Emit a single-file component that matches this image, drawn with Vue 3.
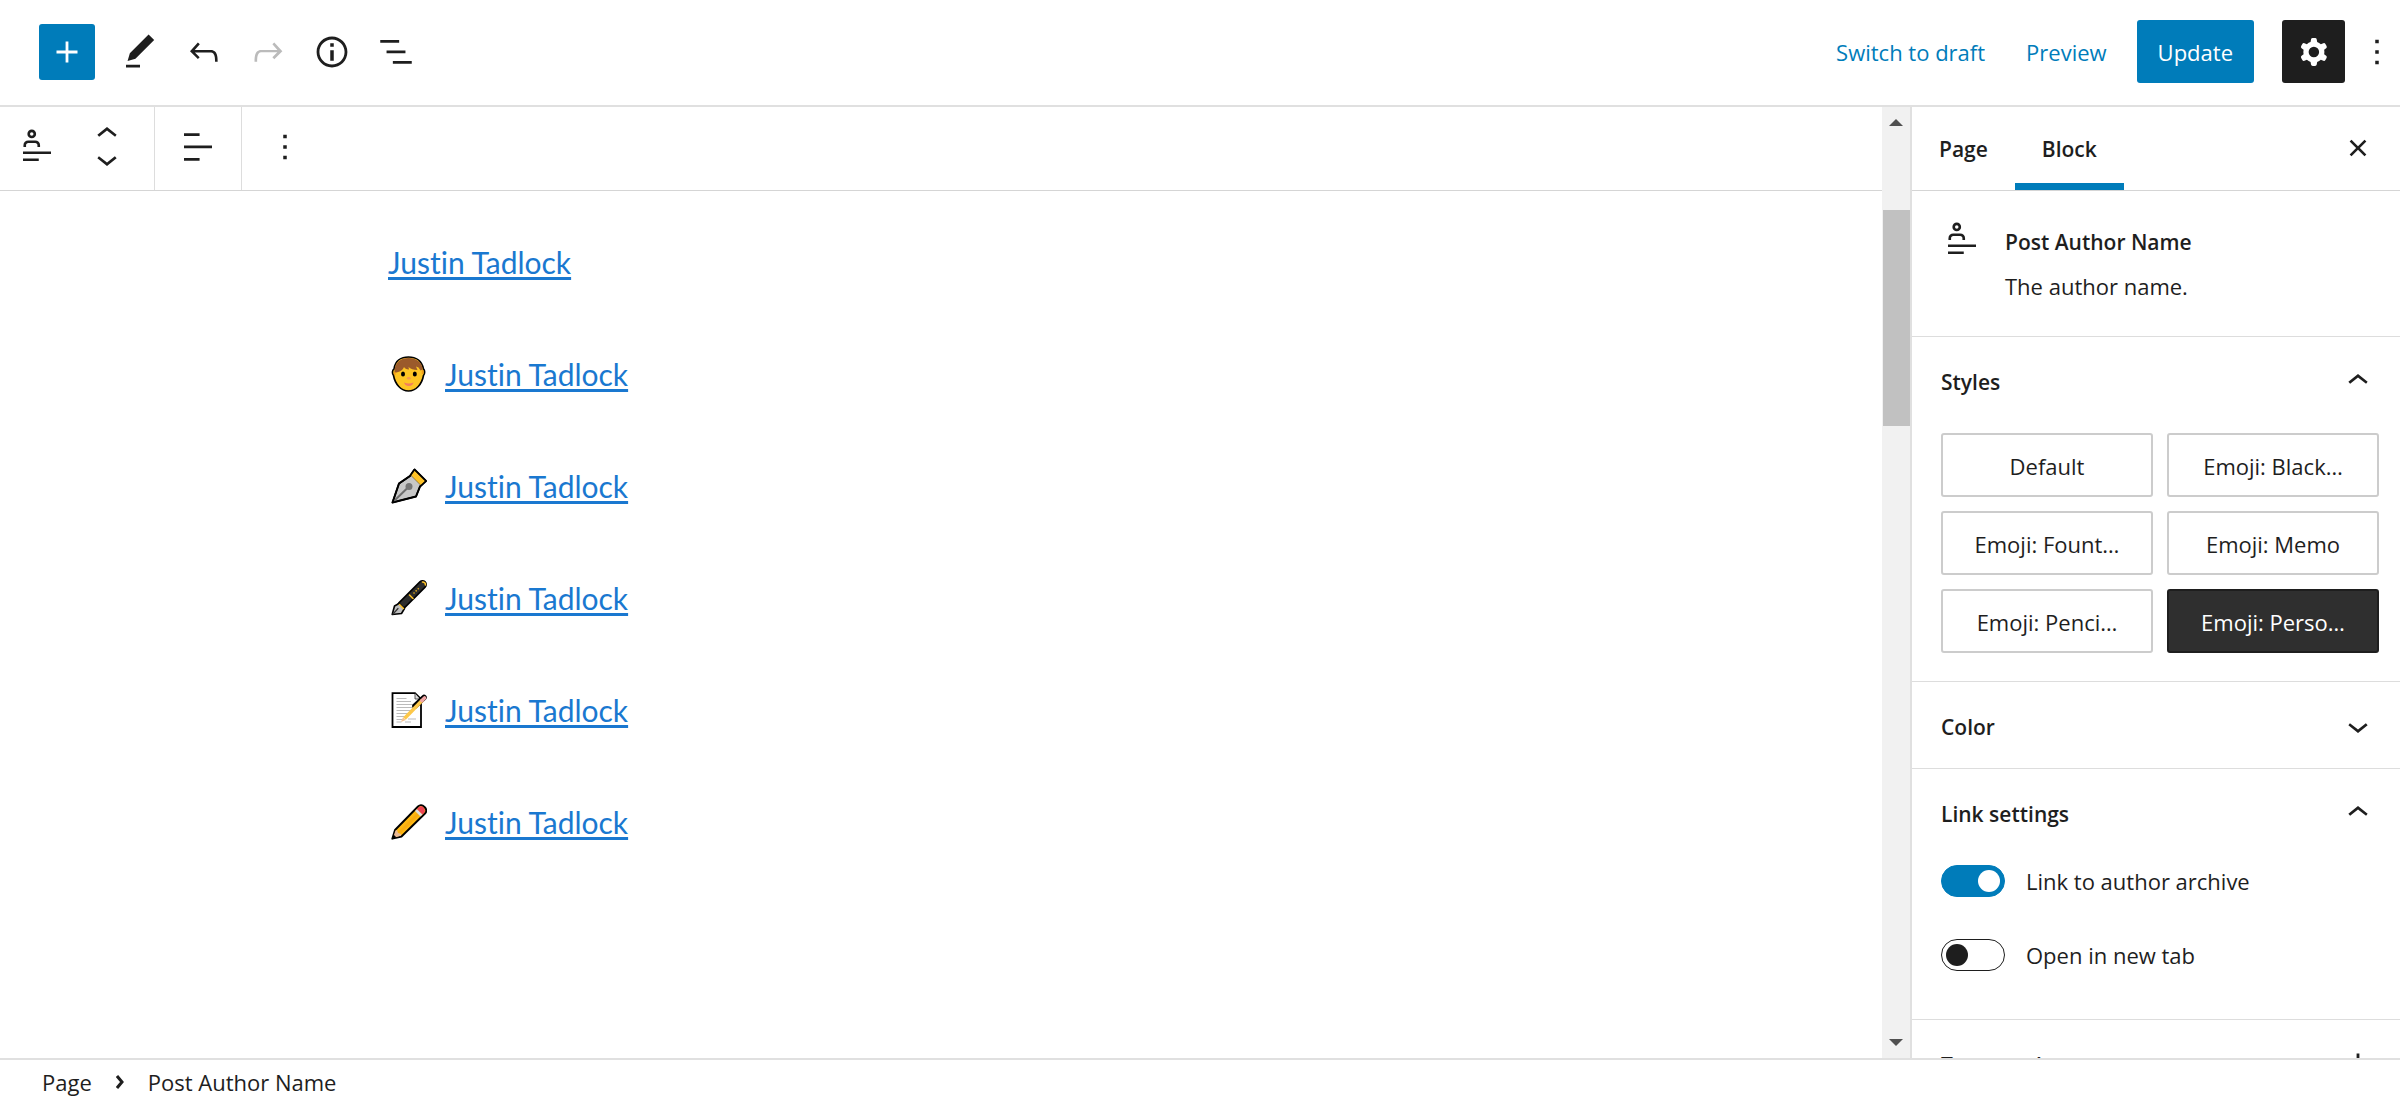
<script setup>
import { ref } from 'vue'

const icons = {
  plus: 'M18 11.2h-5.2V6h-1.6v5.2H6v1.6h5.2V18h1.6v-5.2H18z',
  edit: 'M20.1 5.1L16.9 2 6.2 12.7l-1.3 4.4 4.5-1.3L20.1 5.1zM4 20.8h8v-1.5H4v1.5z',
  undo: 'M18.3 11.7c-.6-.6-1.4-.9-2.3-.9H6.7l2.9-3.3-1.1-1-4.5 5L8.5 16l1-1-2.7-2.7H16c.5 0 .9.2 1.3.5 1 1 1 3.4 1 4.5v.3h1.5v-.2c0-1.5 0-4.3-1.5-5.7z',
  redo: 'M15.6 6.5l-1.1 1 2.9 3.3H8c-.9 0-1.7.3-2.3.9-1.4 1.5-1.4 4.2-1.4 5.6v.2h1.5v-.3c0-1.1 0-3.5 1-4.5.3-.3.7-.5 1.3-.5h9.2L14.5 15l1.1 1.1 4.6-4.6-4.6-5z',
  info: 'M12 3.2c-4.8 0-8.8 3.9-8.8 8.8 0 4.8 3.9 8.8 8.8 8.8 4.8 0 8.8-3.9 8.8-8.8 0-4.8-4-8.8-8.8-8.8zm0 16c-4 0-7.2-3.3-7.2-7.2C4.8 8 8 4.8 12 4.8s7.2 3.3 7.2 7.2c0 4-3.2 7.2-7.2 7.2zM11 17h2v-6h-2v6zm0-8h2V7h-2v2z',
  list: 'M13.8 5.2H3v1.5h10.8V5.2zm-3.6 12v1.5H21v-1.5H10.2zm7.2-6H6.6v1.5h10.8v-1.5z',
  cog: 'M10.289 4.836A1 1 0 0111.275 4h1.306a1 1 0 01.987.836l.244 1.466c.787.26 1.503.679 2.108 1.218l1.393-.522a1 1 0 011.216.437l.653 1.13a1 1 0 01-.23 1.273l-1.148.944a6.025 6.025 0 010 2.435l1.149.946a1 1 0 01.23 1.272l-.653 1.13a1 1 0 01-1.216.437l-1.394-.522c-.605.54-1.32.958-2.108 1.218l-.244 1.466a1 1 0 01-.987.836h-1.306a1 1 0 01-.986-.836l-.244-1.466a5.995 5.995 0 01-2.108-1.218l-1.394.522a1 1 0 01-1.217-.436l-.653-1.131a1 1 0 01.23-1.272l1.149-.946a6.026 6.026 0 010-2.435l-1.148-.944a1 1 0 01-.23-1.272l.653-1.131a1 1 0 011.217-.437l1.393.522a5.994 5.994 0 012.108-1.218l.244-1.466zM14.929 12a3 3 0 11-6 0 3 3 0 016 0z',
  more: 'M13 19h-2v-2h2v2zm0-6h-2v-2h2v2zm0-6h-2V5h2v2z',
  author: 'M10 4.5a1 1 0 11-2 0 1 1 0 012 0zm1.5 0a2.5 2.5 0 11-5 0 2.5 2.5 0 015 0zm2.25 7.5v-1A2.75 2.75 0 0011 8.25H7A2.75 2.75 0 004.25 11v1h1.5v-1c0-.69.56-1.25 1.25-1.25h4c.69 0 1.25.56 1.25 1.25v1h1.5zM4 20h9v-1.5H4V20zm16-4H4v-1.5h16V16z',
  up: 'M6.5 12.4L12 8l5.5 4.4-.9 1.2L12 10l-4.5 3.6-1-1.2z',
  down: 'M17.5 11.6L12 16l-5.5-4.4.9-1.2L12 14l4.5-3.6 1 1.2z',
  align: 'M4 19.8h8.9v-1.5H4v1.5zm8.9-15.6H4v1.5h8.9V4.2zm-8.9 7v1.5h16v-1.5H4z',
  close: 'M12 13.06l3.712 3.713 1.061-1.06L13.061 12l3.712-3.712-1.06-1.06L12 10.938 8.288 7.227l-1.061 1.06L10.939 12l-3.712 3.712 1.06 1.061L12 13.061z'
}

const tools = [
  { name: 'Edit', icon: 'edit' },
  { name: 'Undo', icon: 'undo' },
  { name: 'Redo', icon: 'redo', disabled: true },
  { name: 'Details', icon: 'info' },
  { name: 'List view', icon: 'list' }
]

const authors = ['', 'person', 'nib', 'pen', 'memo', 'pencil']
const styles = ['Default', 'Emoji: Black…', 'Emoji: Fount…', 'Emoji: Memo', 'Emoji: Penci…', 'Emoji: Perso…']
const activeStyle = ref('Emoji: Perso…')
const linkArchive = ref(true)
const newTab = ref(false)
</script>

<template>
  <div class="editor">
    <header class="header">
      <div class="tools">
        <button class="icon-btn add" aria-label="Toggle block inserter">
          <svg class="icon" viewBox="0 0 24 24"><path :d="icons.plus" /></svg>
        </button>
        <button v-for="t in tools" :key="t.name" class="icon-btn" :aria-label="t.name" :disabled="t.disabled">
          <svg class="icon" viewBox="0 0 24 24"><path :d="icons[t.icon]" /></svg>
        </button>
      </div>
      <div class="actions">
        <button class="text-btn">Switch to draft</button>
        <button class="text-btn">Preview</button>
        <button class="update">Update</button>
        <button class="settings" aria-label="Settings">
          <svg class="icon" viewBox="0 0 24 24"><path fill-rule="evenodd" :d="icons.cog" /></svg>
        </button>
        <button class="options" aria-label="Options">
          <svg class="icon" viewBox="0 0 24 24"><path :d="icons.more" /></svg>
        </button>
      </div>
    </header>

    <div class="body">
      <main class="content">
        <div class="toolbar" role="toolbar" aria-label="Block tools">
          <div class="group first">
            <button class="icon-btn" aria-label="Post Author Name">
              <svg class="icon" viewBox="0 0 24 24"><path fill-rule="evenodd" :d="icons.author" /></svg>
            </button>
            <div class="movers">
              <button aria-label="Move up"><svg class="icon" viewBox="0 0 24 24"><path :d="icons.up" /></svg></button>
              <button aria-label="Move down"><svg class="icon" viewBox="0 0 24 24"><path :d="icons.down" /></svg></button>
            </div>
          </div>
          <div class="group">
            <button class="icon-btn" aria-label="Align text">
              <svg class="icon" viewBox="0 0 24 24"><path :d="icons.align" /></svg>
            </button>
          </div>
          <div class="group">
            <button class="icon-btn" aria-label="More">
              <svg class="icon" viewBox="0 0 24 24"><path :d="icons.more" /></svg>
            </button>
          </div>
        </div>

        <div class="canvas">
          <div class="column">
            <p v-for="a in authors" :key="a" class="author">
              <svg v-if="a" class="emoji" viewBox="0 0 36 36" aria-hidden="true">
                <g v-if="a === 'person'">
                  <path d="M3 13C4 5 10 1 17.500 1S31 5 32.500 13c1.500 1 1.600 5 0 6.500C31 28 25 35 17.500 35S4 28 2.500 19.500C1 18 1 14 3 13z" fill="#fec524" stroke="#000" stroke-width="1.600" />
                  <path d="M3.500 14C4.500 6 10 2 17.500 2S31 6 31.800 13.500l-2.300 1-2-3-2.500-1 1.500 3.500c-4 0-7-1-9-3l.5 2.500c-3 0-4-1-5-2.500-1 3-4 5-9.500 6z" fill="#9b5a2b" />
                  <path d="M31.500 14v4M3.800 16v3" stroke="#f49b1b" stroke-width="1.500" />
                  <ellipse cx="12" cy="18" rx="2" ry="2.600" /><ellipse cx="23.800" cy="18" rx="2" ry="2.600" />
                  <ellipse cx="17.800" cy="22.300" rx="2" ry="1.300" fill="#f69a52" />
                  <path d="M13 26.500q4.800 1.800 9.600 0-1.200 3.500-4.800 3.500T13 26.500z" fill="#f27d5e" />
                </g>
                <g v-else-if="a === 'nib'" stroke-linejoin="round">
                  <path d="M1.500 34.500L8 15.500 19 8l4.500-6.500L35 13l-6 5.500-4 10z" fill="#c8c8c8" stroke="#000" stroke-width="2" />
                  <path d="M19.500 7l4-4.500L34.500 13 30 17.500z" fill="#fdc228" stroke="#4b3b12" stroke-width=".5" />
                  <path d="M2 34L17.500 19" stroke="#6e6e6e" stroke-width="2" />
                  <circle cx="18" cy="18.500" r="3.500" fill="#767676" />
                  <path d="M1.500 34.500L8 15.500 19 8l4.500-6.500L35 13l-6 5.500-4 10z" fill="none" stroke="#000" stroke-width="1.600" />
                </g>
                <g v-else-if="a === 'pen'" stroke-linecap="round">
                  <path d="M10.500 25.500L31.500 4.500" stroke="#000" stroke-width="9" />
                  <path d="M12 24L31.500 4.500" stroke="#2d2d2d" stroke-width="6" />
                  <path d="M1.200 34.500L3.500 26 8 23.500l5.500 5-3 5z" fill="#bfbfbf" stroke="#000" stroke-width="1.600" stroke-linejoin="round" />
                  <path d="M2 34l5-5.500" stroke="#333" stroke-width="1.200" />
                  <path d="M8.500 24.500l4 4M18.500 15l3.500 3.500M31.500 2c2 0 3 1 3 3" stroke="#fdc228" stroke-width="1.500" fill="none" />
                  <path d="M22.500 13.500l6-6" stroke="#d9a51d" stroke-width="1.500" stroke-dasharray="1.500 1.500" stroke-linecap="butt" />
                </g>
                <g v-else-if="a === 'memo'">
                  <path d="M1.500 1.200H24l6 6V35H1.500z" fill="#fff" stroke="#000" stroke-width="1.800" />
                  <path d="M24 1.500V7h5" fill="#ddd" stroke="#333" stroke-width=".8" />
                  <path d="M5.500 6.500h10M5.500 9.500H20M5.500 12.500h20M5.500 15.500h17M5.500 18.500h16M5.500 21.500h12M5.500 24.500h9M5.500 27.500h6M5.500 30h5M17 27h8M14 30h6" stroke="#aaa" stroke-width=".8" />
                  <path d="M24 14L33 5.500" stroke="#000" stroke-width="5.600" stroke-linecap="round" />
                  <path d="M13.500 26.500L31.500 8" stroke="#fdc84a" stroke-width="3.600" />
                  <path d="M31 8.500l2.500-2.500" stroke="#f1a5a5" stroke-width="3.600" stroke-linecap="round" />
                  <path d="M12 25.300L10 30l4.800-2z" fill="#f4c393" />
                </g>
                <g v-else stroke-linejoin="round">
                  <path d="M1.300 34.700L4 26 27 2.500q3-3 6.500.5t.5 6.500L10.500 32.500z" fill="#fdb813" stroke="#000" stroke-width="1.900" />
                  <path d="M8 29L29 8" stroke="#f8ac10" stroke-width="3" />
                  <path d="M26 5l5.500 5.500-2 2L24 7z" fill="#dedede" />
                  <path d="M27.500 3.500q3-2.500 5.200.2t.3 5.300l-1.500 1.500L26 5z" fill="#ee4455" />
                  <path d="M2 34l2.500-7.500L6 26l1 3 3 1v1.800z" fill="#e9b996" />
                  <path d="M1.300 34.700l1.200-4.200 3 3z" />
                </g>
              </svg>
              <a href="#">Justin Tadlock</a>
            </p>
          </div>
        </div>
      </main>

      <div class="scrollbar" aria-hidden="true">
        <svg viewBox="0 0 14 7"><path d="M0 7l7-7 7 7z" /></svg>
        <div class="track"><div class="thumb"></div></div>
        <svg viewBox="0 0 14 7"><path d="M0 0l7 7 7-7z" /></svg>
      </div>

      <aside class="sidebar">
        <div class="tabs" role="tablist">
          <button role="tab">Page</button>
          <button role="tab" class="active" aria-selected="true">Block</button>
          <button class="close" aria-label="Close settings">
            <svg class="icon" viewBox="0 0 24 24"><path :d="icons.close" /></svg>
          </button>
        </div>

        <section class="card">
          <svg class="icon" viewBox="0 0 24 24"><path fill-rule="evenodd" :d="icons.author" /></svg>
          <div>
            <h2>Post Author Name</h2>
            <p>The author name.</p>
          </div>
        </section>

        <section class="panel">
          <button class="panel-title">
            Styles
            <svg class="icon" viewBox="0 0 24 24"><path :d="icons.up" /></svg>
          </button>
          <div class="styles">
            <button
              v-for="s in styles"
              :key="s"
              :class="{ active: s === activeStyle }"
              @click="activeStyle = s"
            >{{ s }}</button>
          </div>
        </section>

        <section class="panel">
          <button class="panel-title">
            Color
            <svg class="icon" viewBox="0 0 24 24"><path :d="icons.down" /></svg>
          </button>
        </section>

        <section class="panel">
          <button class="panel-title">
            Link settings
            <svg class="icon" viewBox="0 0 24 24"><path :d="icons.up" /></svg>
          </button>
          <div class="toggles">
            <label><input v-model="linkArchive" type="checkbox" />Link to author archive</label>
            <label><input v-model="newTab" type="checkbox" />Open in new tab</label>
          </div>
        </section>

        <section class="panel">
          <button class="panel-title">
            Typography
            <svg class="icon" viewBox="0 0 24 24"><path :d="icons.plus" /></svg>
          </button>
        </section>
      </aside>
    </div>

    <footer class="footer">
      <span>Page</span>
      <svg viewBox="0 0 8 14"><path d="M1 1l5 6-5 6" /></svg>
      <span>Post Author Name</span>
    </footer>
  </div>
</template>

<style>
body {
  margin: 0;
}
</style>

<style scoped>
.editor {
  display: flex;
  flex-direction: column;
  height: 100vh;
  overflow: hidden;
  background: #fff;
  color: #1e1e1e;
  font: 22px/32px "Open Sans", "Noto Sans", sans-serif;
}
.editor *,
.editor *::before {
  box-sizing: border-box;
}
button {
  display: flex;
  align-items: center;
  justify-content: center;
  padding: 0;
  border: 0;
  border-radius: 3px;
  background: none;
  color: inherit;
  font: inherit;
  white-space: nowrap;
}
h2,
p {
  margin: 0;
}
.icon {
  flex: none;
  width: 42px;
  height: 42px;
  fill: currentColor;
}
.icon-btn {
  flex: none;
  width: 56px;
  height: 56px;
}
.icon-btn:disabled {
  color: #bbb;
}

.header {
  display: flex;
  flex: none;
  justify-content: space-between;
  height: 107px;
  padding: 0 0 2px 39px;
  border-bottom: 2px solid #e0e0e0;
}
.tools,
.actions {
  display: flex;
  align-items: center;
}
.tools {
  gap: 8px;
}
.add {
  margin-right: 9px;
  background: #007cba;
  color: #fff;
}
.text-btn {
  height: 63px;
  margin-right: 41px;
  color: #007cba;
}
.text-btn:nth-child(2) {
  margin-right: 30px;
}
.text-btn,
.update {
  padding-top: 1px;
}
.actions .update {
  height: 63px;
  margin-right: 28px;
  padding-right: 21px;
  padding-left: 21px;
  background: #007cba;
  color: #fff;
}
.settings {
  width: 63px;
  height: 63px;
  margin-right: 9px;
  background: #1e1e1e;
  color: #fff;
}
.options {
  width: 46px;
  height: 63px;
}

.body {
  display: flex;
  flex: 1;
  min-height: 0;
}
.content {
  display: flex;
  flex: 1;
  flex-direction: column;
  min-width: 0;
}
.toolbar {
  display: flex;
  flex: none;
  height: 84px;
  border-bottom: 1px solid #d5d5d5;
}
.group {
  display: flex;
  align-items: center;
  padding: 0 15px 4px;
}
.group + .group {
  border-left: 1px solid #ddd;
}
.group.first {
  padding: 0 19px 4px 9px;
}
.movers {
  width: 56px;
  margin-left: 14px;
}
.movers button {
  width: 56px;
  height: 25px;
}

.canvas {
  flex: 1;
  min-height: 0;
  overflow: hidden;
  padding-top: 47px;
}
.column {
  display: flex;
  flex-direction: column;
  gap: 64px;
  max-width: 1106px;
  margin: 0 auto;
}
.author {
  display: flex;
  align-items: center;
  gap: 18px;
  height: 48px;
  font: 30px/48px Lato, "Open Sans", sans-serif;
  font-variant-ligatures: none;
}
.emoji {
  width: 36px;
  height: 36px;
  margin-left: 3px;
}
.author a {
  color: #1a78d0;
  text-decoration-thickness: 3px;
  text-underline-offset: 3px;
}

.scrollbar {
  display: flex;
  flex: none;
  flex-direction: column;
  align-items: center;
  width: 28px;
  padding: 12px 0;
  background: #f1f1f1;
}
.scrollbar svg {
  width: 14px;
  height: 7px;
  fill: #505050;
}
.track {
  flex: 1;
  align-self: stretch;
  padding: 84px 0 0 1px;
}
.thumb {
  height: 216px;
  background: #c1c1c1;
}

.sidebar {
  flex: none;
  width: 490px;
  overflow: hidden;
  border-left: 2px solid #e0e0e0;
}
.tabs {
  display: flex;
  height: 84px;
  border-bottom: 1px solid #d5d5d5;
}
.tabs button {
  padding: 0 27px;
  border-radius: 0;
  font-size: 21px;
  font-weight: 600;
}
.tabs .active {
  box-shadow: inset 0 -7px #007cba;
}
.tabs .close {
  width: 42px;
  margin: 0 21px 2px auto;
  padding: 0;
}
.card {
  display: flex;
  gap: 22px;
  padding: 28px 28px 34px 29px;
}
.card h2 {
  margin: 7px 0 12px;
  font-size: 21px;
  font-weight: 600;
  line-height: 32px;
}
.panel {
  border-top: 1px solid #ddd;
}
.panel-title {
  justify-content: space-between;
  width: 100%;
  height: 86px;
  padding: 4px 21px 0 29px;
  border-radius: 0;
  font-size: 21px;
  font-weight: 600;
}
.panel-title .icon {
  margin-bottom: 2px;
}
.styles {
  display: grid;
  grid-template-columns: 1fr 1fr;
  gap: 14px;
  padding: 10px 21px 28px 29px;
}
.styles button {
  height: 64px;
  padding-top: 2px;
  border: 2px solid #ccc;
}
.styles .active {
  border-color: #1e1e1e;
  background: #2f2f2f;
  color: #fff;
}
.toggles {
  display: flex;
  flex-direction: column;
  gap: 42px;
  padding: 10px 21px 48px 29px;
}
.toggles label {
  display: flex;
  align-items: center;
  gap: 21px;
}
.toggles input {
  display: flex;
  align-items: center;
  appearance: none;
  width: 64px;
  height: 32px;
  margin: 0;
  padding: 0 4px;
  border: 1px solid #1e1e1e;
  border-radius: 16px;
}
.toggles input::before {
  width: 22px;
  height: 22px;
  border-radius: 50%;
  background: #1e1e1e;
  content: "";
}
.toggles input:checked {
  justify-content: flex-end;
  border-color: #007cba;
  background: #007cba;
}
.toggles input:checked::before {
  background: #fff;
}

.footer {
  display: flex;
  flex: none;
  align-items: center;
  gap: 24px;
  height: 40px;
  padding: 5px 42px 0;
  border-top: 2px solid #e0e0e0;
}
.footer svg {
  width: 8px;
  height: 14px;
  fill: none;
  stroke: #1e1e1e;
  stroke-width: 3;
}
</style>
